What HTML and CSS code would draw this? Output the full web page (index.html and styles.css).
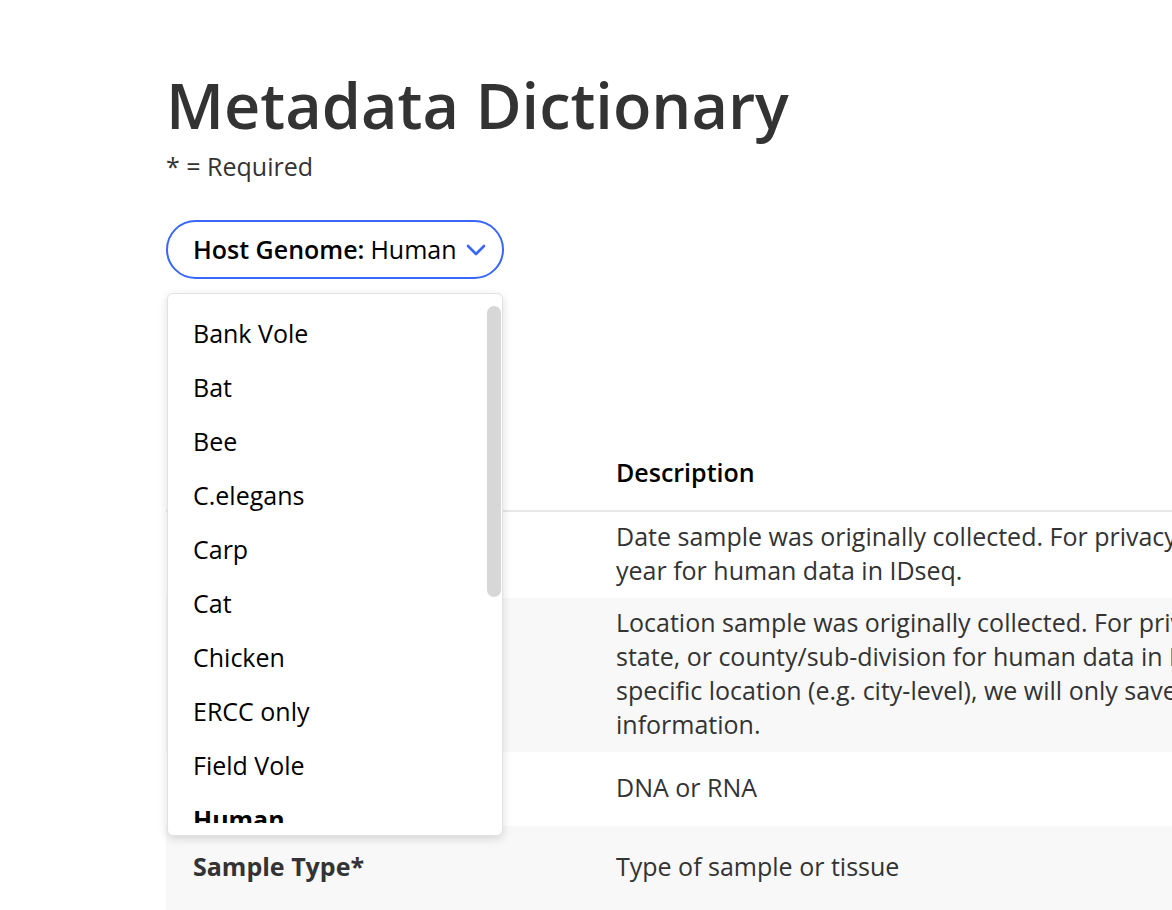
FILE: index.html
```html
<!DOCTYPE html>
<html lang="en">
<head>
    <meta charset="UTF-8">
    <title>Metadata Dictionary</title>
    <link rel="stylesheet" href="styles.css">
</head>
<body>
    <div class="page">
        <h1 class="title">Metadata Dictionary</h1>
        <div class="required-note">* = Required</div>

        <div class="genome-filter">
            <button class="genome-btn">
                <span class="genome-label">Host Genome:</span>
                <span class="genome-value">Human</span>
                <svg class="chevron" width="20" height="12" viewBox="0 0 20 12">
                    <polyline points="2,2 10,10 18,2" fill="none" stroke="#3867fa" stroke-width="2.6" stroke-linecap="round" stroke-linejoin="round"/>
                </svg>
            </button>

            <div class="genome-menu">
                <div class="menu-list">
                    <div class="menu-item">Bank Vole</div>
                    <div class="menu-item">Bat</div>
                    <div class="menu-item">Bee</div>
                    <div class="menu-item">C.elegans</div>
                    <div class="menu-item">Carp</div>
                    <div class="menu-item">Cat</div>
                    <div class="menu-item">Chicken</div>
                    <div class="menu-item">ERCC only</div>
                    <div class="menu-item">Field Vole</div>
                    <div class="menu-item selected">Human</div>
                    <div class="menu-item">Mosquito</div>
                    <div class="menu-item">Mouse</div>
                    <div class="menu-item">Pig</div>
                    <div class="menu-item">Rat</div>
                    <div class="menu-item">Tick</div>
                </div>
                <div class="scroll-thumb"></div>
            </div>
        </div>

        <table class="dictionary">
            <thead>
                <tr>
                    <th class="col-name">Name</th>
                    <th class="col-desc">Description</th>
                    <th class="col-examples">Examples</th>
                </tr>
            </thead>
            <tbody>
                <tr>
                    <td class="field-name">Collection Date*</td>
                    <td>Date sample was originally collected. For privacy reasons, only use month and/or year for human data in IDseq.</td>
                    <td>2018-01</td>
                </tr>
                <tr>
                    <td class="field-name">Collection Location*</td>
                    <td>Location sample was originally collected. For privacy reasons, only use country, state, or county/sub-division for human data in IDseq. If you upload a more specific location (e.g. city-level), we will only save the county/sub-division information.</td>
                    <td>Los Angeles, USA</td>
                </tr>
                <tr class="row-short">
                    <td class="field-name">Nucleotide Type*</td>
                    <td>DNA or RNA</td>
                    <td>DNA</td>
                </tr>
                <tr class="row-tall">
                    <td class="field-name">Sample Type*</td>
                    <td>Type of sample or tissue</td>
                    <td>CSF</td>
                </tr>
            </tbody>
        </table>
    </div>
</body>
</html>
```

FILE: styles.css
```css
body {
    margin: 0;
    font-family: 'Open Sans', 'Liberation Sans', sans-serif;
    color: #333;
    background-color: white;
    overflow-x: hidden;
}

.page {
    padding: 65px 0 0 166px;
}

.title {
    margin: 0;
    font-size: 63px;
    font-weight: 600;
    line-height: 79px;
    color: #333;
}

.required-note {
    margin-top: 5px;
    font-size: 25px;
    line-height: 34px;
}

/* ---- host genome dropdown ---- */
.genome-filter {
    position: relative;
    margin-top: 37px;
}

.genome-btn {
    display: inline-flex;
    align-items: center;
    padding: 10px 16px 10px 25px;
    border: 2px solid #3867fa;
    border-radius: 30px;
    background-color: white;
    font-family: inherit;
    font-size: 25px;
    line-height: 35px;
    color: #000;
    cursor: pointer;
}

.genome-label {
    font-weight: 600;
    margin-right: 6px;
}

.chevron {
    margin-left: 9px;
}

.genome-menu {
    position: absolute;
    top: calc(100% + 14px);
    left: 1px;
    width: 334px;
    padding: 12px 0;
    background-color: white;
    border: 1px solid #e2e2e2;
    border-radius: 6px;
    box-shadow: 0 3px 10px rgba(0,0,0,0.14);
    z-index: 10;
}

.menu-list {
    height: 517px;
    overflow: hidden;
}

.menu-item {
    padding: 10px 25px;
    font-size: 25px;
    line-height: 34px;
    color: #000;
}

.menu-item.selected {
    font-weight: 700;
}

.scroll-thumb {
    position: absolute;
    top: 12px;
    right: 1px;
    width: 14px;
    height: 291px;
    border-radius: 7px;
    background-color: #d7d7d7;
}

/* ---- dictionary table ---- */
.dictionary {
    width: 2000px;
    margin-top: 156px;
    table-layout: fixed;
    border-collapse: collapse;
    font-size: 25px;
    line-height: 34px;
    color: #333;
}

.dictionary th {
    padding: 20px 27px 21px;
    text-align: left;
    font-weight: 600;
    color: #000;
    border-bottom: 2px solid #e8e8e8;
}

.dictionary td {
    padding: 7px 27px 11px;
    vertical-align: middle;
}

.col-name {
    width: 369px;
}

.col-desc {
    width: 950px;
}

.field-name {
    font-weight: 700;
}

.dictionary tbody tr:nth-child(even) {
    background-color: #f8f8f8;
}

.row-short {
    height: 74px;
}

.row-tall {
    height: 84px;
}
```
